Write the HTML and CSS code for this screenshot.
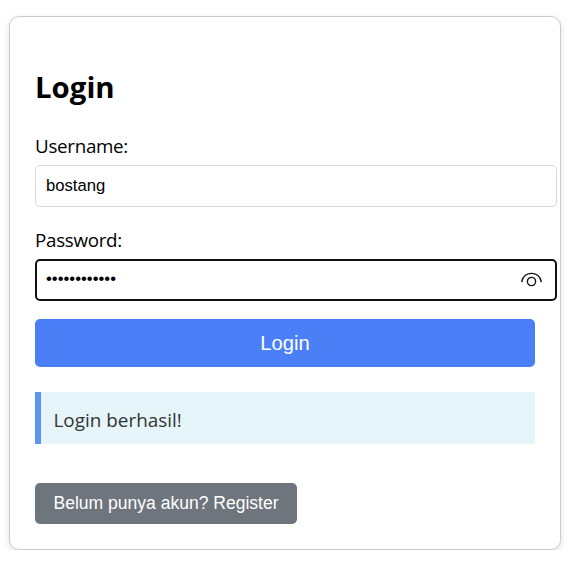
FILE: index.html
```html
<!DOCTYPE html>
<html lang="id">
<head>
<meta charset="utf-8">
<title>Login</title>
<link rel="stylesheet" href="styles.css">
</head>
<body>
<main class="card">
  <h2 class="title">Login</h2>
  <form>
    <label class="label" for="username">Username:</label>
    <input class="field" id="username" type="text" value="bostang">
    <label class="label label-second" for="password">Password:</label>
    <div class="password">
      <input class="field field-active" id="password" type="password" value="bostang12345">
      <svg class="eye" viewBox="0 0 22 16" fill="none" stroke="#111" stroke-width="1.4" stroke-linecap="round"><path d="M1.8 9.5C3.9-1.4 19.1-1.4 21.2 9.5"/><circle cx="11.5" cy="9.5" r="4.1"/></svg>
    </div>
    <button class="submit" type="button">Login</button>
  </form>
  <p class="message">Login berhasil!</p>
  <button class="register" type="button">Belum punya akun? Register</button>
</main>
</body>
</html>
```
FILE: styles.css
```css
* { box-sizing: border-box; }
body {
  margin: 0;
  padding: 16px 0 0 9px;
  background: #fff;
  font-family: "Open Sans", "Noto Sans", sans-serif;
  color: #000;
}
.card {
  width: 552px;
  height: 534px;
  padding: 50px 25px 0;
  border: 1px solid #ccc;
  border-radius: 10px;
  background: #fff;
  box-shadow: 0 2px 6px rgba(0, 0, 0, 0.12);
}
.title {
  margin: 0 0 25px;
  font-size: 29.4px;
  line-height: 40px;
  font-weight: 700;
}
.label {
  display: block;
  height: 33px;
  font-size: 18.8px;
  line-height: 29px;
  letter-spacing: -0.3px;
}
.label-second { margin-top: 19px; }
.field {
  display: block;
  width: 522px;
  height: 42px;
  padding: 0 10px;
  border: 1px solid #d9d9d9;
  border-radius: 5px;
  outline: 0;
  background: #fff;
  color: #000;
  font: 16.67px "Liberation Sans", sans-serif;
}
.field-active { padding: 0 9px 2px; border: 2px solid #101010; }
.password { position: relative; width: 522px; }
.eye { position: absolute; right: 15px; top: 13px; width: 22px; height: 16px; }
.submit {
  display: block;
  width: 100%;
  height: 48px;
  margin-top: 18px;
  padding: 0;
  border: 0;
  border-radius: 5px;
  background: #4a7ff7;
  color: #fff;
  font: 20.2px "Liberation Sans", sans-serif;
}
.message {
  height: 52px;
  margin: 25px 0 39px;
  padding-left: 12.5px;
  border-left: 6px solid #5b96ec;
  background: #e6f5f9;
  color: #333;
  font-size: 18.9px;
  line-height: 56px;
}
.register {
  display: block;
  width: 262px;
  height: 41px;
  padding: 0;
  border: 0;
  border-radius: 5px;
  background: #6e757c;
  color: #fff;
  font: 17.55px "Liberation Sans", sans-serif;
}
```
